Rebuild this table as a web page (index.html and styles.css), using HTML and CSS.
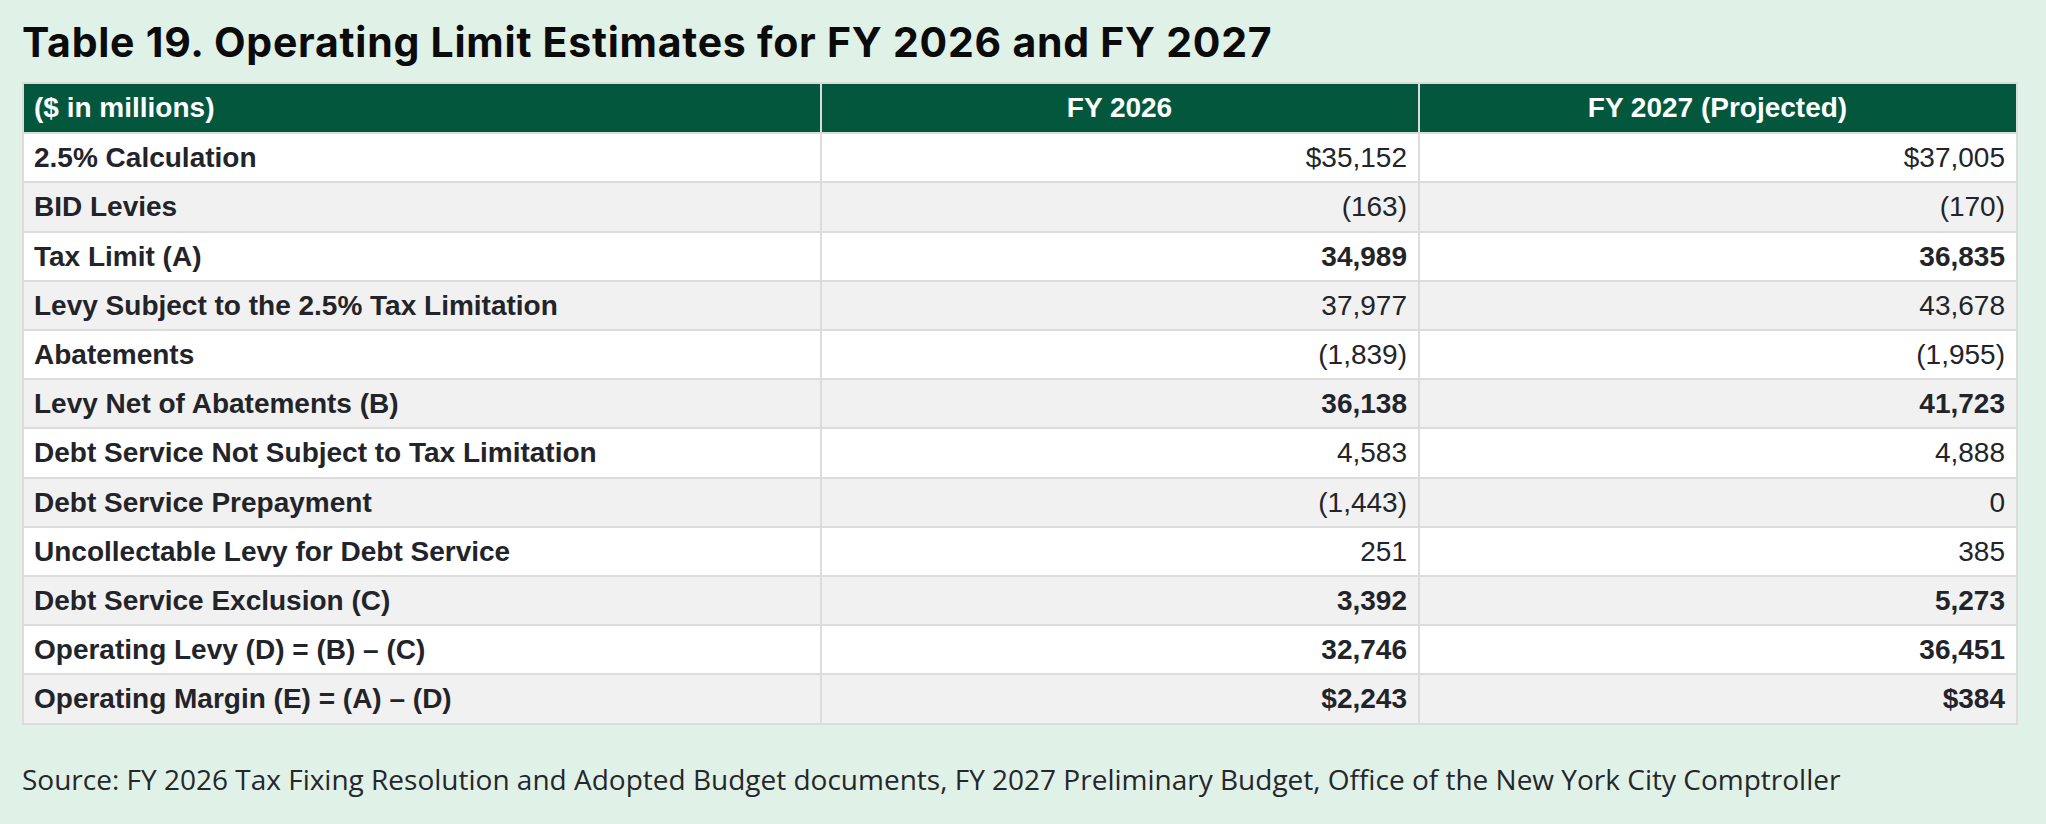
FILE: index.html
```html
<!DOCTYPE html>
<html lang="en">
<head>
<meta charset="utf-8">
<title>Table 19. Operating Limit Estimates for FY 2026 and FY 2027</title>
<link rel="stylesheet" href="styles.css">
</head>
<body>
<main class="page">
  <h1 class="title">Table 19. Operating Limit Estimates for FY 2026 and FY 2027</h1>
  <table class="data">
    <colgroup>
      <col class="c-label">
      <col class="c-num">
      <col class="c-num">
    </colgroup>
    <thead>
      <tr>
        <th class="h-label">($ in millions)</th>
        <th class="h-num">FY 2026</th>
        <th class="h-num">FY 2027 (Projected)</th>
      </tr>
    </thead>
    <tbody>
      <tr><td class="label">2.5% Calculation</td><td class="num">$35,152</td><td class="num">$37,005</td></tr>
      <tr><td class="label">BID Levies</td><td class="num">(163)</td><td class="num">(170)</td></tr>
      <tr><td class="label">Tax Limit (A)</td><td class="num strong">34,989</td><td class="num strong">36,835</td></tr>
      <tr><td class="label">Levy Subject to the 2.5% Tax Limitation</td><td class="num">37,977</td><td class="num">43,678</td></tr>
      <tr><td class="label">Abatements</td><td class="num">(1,839)</td><td class="num">(1,955)</td></tr>
      <tr><td class="label">Levy Net of Abatements (B)</td><td class="num strong">36,138</td><td class="num strong">41,723</td></tr>
      <tr><td class="label">Debt Service Not Subject to Tax Limitation</td><td class="num">4,583</td><td class="num">4,888</td></tr>
      <tr><td class="label">Debt Service Prepayment</td><td class="num">(1,443)</td><td class="num">0</td></tr>
      <tr><td class="label">Uncollectable Levy for Debt Service</td><td class="num">251</td><td class="num">385</td></tr>
      <tr><td class="label">Debt Service Exclusion (C)</td><td class="num strong">3,392</td><td class="num strong">5,273</td></tr>
      <tr><td class="label">Operating Levy (D) = (B) – (C)</td><td class="num strong">32,746</td><td class="num strong">36,451</td></tr>
      <tr><td class="label">Operating Margin (E) = (A) – (D)</td><td class="num strong">$2,243</td><td class="num strong">$384</td></tr>
    </tbody>
  </table>
  <p class="source">Source: FY 2026 Tax Fixing Resolution and Adopted Budget documents, FY 2027 Preliminary Budget, Office of the New York City Comptroller</p>
</main>
</body>
</html>
```

FILE: styles.css
```css
html, body {
  margin: 0;
  padding: 0;
  background: #e0f1e8;
}

.page {
  width: 1996px;
  padding: 20px 0 0 22px;
  box-sizing: content-box;
}

.title {
  margin: 0 0 17px 0;
  font-family: Inter, "Liberation Sans", sans-serif;
  font-weight: 700;
  font-size: 41px;
  line-height: 45px;
  color: #0b0b0b;
  letter-spacing: 0.75px;
}

.data {
  width: 1996px;
  border-collapse: collapse;
  border: 2px solid #dcdcdc;
  font-family: "Liberation Sans", Arial, sans-serif;
  font-size: 28px;
  color: #222429;
  table-layout: fixed;
}

.c-label { width: 798px; }
.c-num { width: 598px; }

.data th,
.data td {
  border: 2px solid #dcdcdc;
  padding: 7px 11px 7px 10px;
  line-height: 33.2px;
  white-space: nowrap;
}

.data thead th {
  background: #02573d;
  color: #ffffff;
  font-weight: 700;
  padding-top: 7px;
  padding-bottom: 8px;
}

.h-label { text-align: left; }
.h-num { text-align: center; }

.data tbody tr:nth-child(odd) { background: #ffffff; }
.data tbody tr:nth-child(even) { background: #f1f1f1; }

.label {
  font-weight: 700;
  text-align: left;
}

.num {
  text-align: right;
  font-weight: 400;
}

.num.strong { font-weight: 700; }

.source {
  margin: 36px 0 0 0;
  font-family: "Open Sans", "Liberation Sans", sans-serif;
  font-size: 28px;
  line-height: 36px;
  color: #25272b;
}
```
